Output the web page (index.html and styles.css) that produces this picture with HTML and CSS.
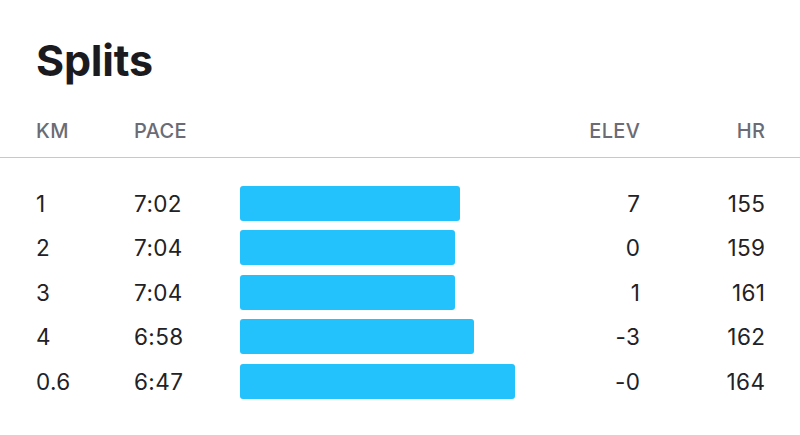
FILE: index.html
```html
<!DOCTYPE html>
<html>
<head>
<meta charset="utf-8">
<link rel="stylesheet" href="styles.css">
</head>
<body>
<section class="splits">
  <h1 class="title">Splits</h1>
  <div class="grid head">
    <div class="c-km">KM</div>
    <div class="c-pace">PACE</div>
    <div class="c-bar"></div>
    <div class="c-elev">ELEV</div>
    <div class="c-hr">HR</div>
  </div>
  <div class="rows">
    <div class="grid row">
      <div class="c-km">1</div>
      <div class="c-pace">7:02</div>
      <div class="c-bar"><div class="bar" style="width:220px"></div></div>
      <div class="c-elev">7</div>
      <div class="c-hr">155</div>
    </div>
    <div class="grid row">
      <div class="c-km">2</div>
      <div class="c-pace">7:04</div>
      <div class="c-bar"><div class="bar" style="width:215px"></div></div>
      <div class="c-elev">0</div>
      <div class="c-hr">159</div>
    </div>
    <div class="grid row">
      <div class="c-km">3</div>
      <div class="c-pace">7:04</div>
      <div class="c-bar"><div class="bar" style="width:215px"></div></div>
      <div class="c-elev">1</div>
      <div class="c-hr">161</div>
    </div>
    <div class="grid row">
      <div class="c-km">4</div>
      <div class="c-pace">6:58</div>
      <div class="c-bar"><div class="bar" style="width:234px"></div></div>
      <div class="c-elev">-3</div>
      <div class="c-hr">162</div>
    </div>
    <div class="grid row">
      <div class="c-km">0.6</div>
      <div class="c-pace">6:47</div>
      <div class="c-bar"><div class="bar" style="width:275px"></div></div>
      <div class="c-elev">-0</div>
      <div class="c-hr">164</div>
    </div>
  </div>
</section>
</body>
</html>
```
FILE: styles.css
```css
html, body {
  margin: 0;
  padding: 0;
  background: #ffffff;
}
body {
  font-family: Inter, "Liberation Sans", sans-serif;
  color: #1e1e22;
  width: 800px;
  height: 435px;
  overflow: hidden;
}
.splits {
  padding-top: 36px;
}
.title {
  margin: 0 0 35px 0;
  padding: 0 36px;
  font-size: 43px;
  line-height: 48px;
  font-weight: 700;
  letter-spacing: -0.2px;
  color: #1b1b1f;
}
.grid {
  display: grid;
  grid-template-columns: 98px 106px 1fr 80px 125px;
  padding: 0 35px 0 36px;
  align-items: center;
}
.head {
  font-size: 20px;
  line-height: 24px;
  font-weight: 500;
  letter-spacing: 0.4px;
  color: #6b6b75;
  padding-bottom: 14px;
  border-bottom: 1px solid #c8c8cc;
}
.rows {
  padding-top: 23px;
}
.row {
  height: 44.5px;
  font-size: 22.5px;
  font-weight: 400;
  letter-spacing: 0.4px;
  color: #222226;
}
.c-elev, .c-hr {
  text-align: right;
  margin-right: -0.4px;
}
.c-bar {
  display: flex;
  align-items: center;
}
.bar {
  height: 35px;
  background: #24c2fc;
  border-radius: 3px;
}
```
